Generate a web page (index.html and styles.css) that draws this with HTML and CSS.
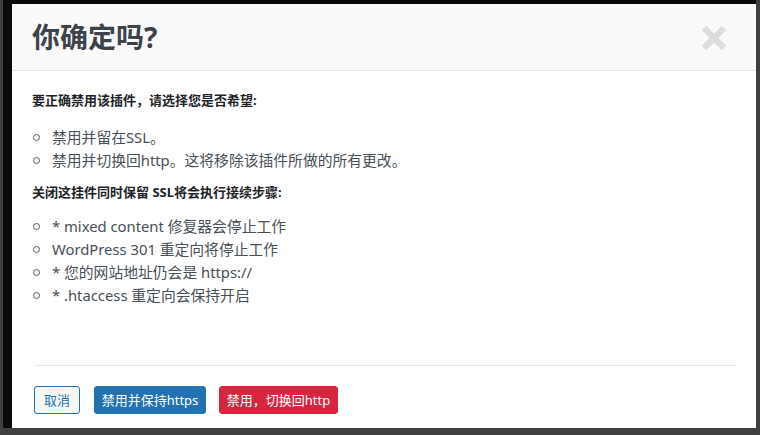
FILE: index.html
```html
<!DOCTYPE html>
<html lang="zh">
<head>
<meta charset="utf-8">
<link rel="stylesheet" href="styles.css">
</head>
<body>
<div class="frame">
  <div class="modal">
    <div class="modal-header">
      <h1 class="title">你确定吗?</h1>
      <span class="close" aria-label="close">
        <svg width="28" height="28" viewBox="0 0 28 28"><path d="M4 4 L24 24 M24 4 L4 24" stroke="#dcdcdc" stroke-width="6.5" stroke-linecap="butt"/></svg>
      </span>
    </div>
    <div class="modal-body">
      <p class="lead lead-first">要正确禁用该插件，请选择您是否希望:</p>
      <ul class="list list-first">
        <li>禁用并留在SSL。</li>
        <li>禁用并切换回http。这将移除该插件所做的所有更改。</li>
      </ul>
      <p class="lead">关闭这挂件同时保留 SSL将会执行接续步骤:</p>
      <ul class="list list-second">
        <li>* mixed content 修复器会停止工作</li>
        <li>WordPress 301 重定向将停止工作</li>
        <li>* 您的网站地址仍会是 https://</li>
        <li>* .htaccess 重定向会保持开启</li>
      </ul>
    </div>
    <div class="modal-footer">
      <button class="btn btn-cancel">取消</button>
      <button class="btn btn-primary">禁用并保持https</button>
      <button class="btn btn-danger">禁用，切换回http</button>
    </div>
  </div>
</div>
</body>
</html>
```
FILE: styles.css
```css
html, body {
  margin: 0;
  padding: 0;
}
body {
  background: #404040;
  width: 760px;
  height: 435px;
  overflow: hidden;
  font-family: "Noto Sans", "Noto Sans CJK SC", sans-serif;
}
.frame {
  margin-left: 3px;
  width: 753px;
  height: 428px;
  box-sizing: border-box;
  padding: 4px 0 0 9px;
  background: #0a0a0a;
}
.modal {
  width: 744px;
  height: 424px;
  background: #ffffff;
  display: flex;
  flex-direction: column;
}
.modal-header {
  height: 67px;
  box-sizing: border-box;
  background: #fafafa;
  border-bottom: 1px solid #e5e5e5;
  display: flex;
  align-items: center;
  justify-content: space-between;
  padding: 0 28px 0 20px;
}
.title {
  margin: 0;
  font-size: 28px;
  font-weight: 700;
  color: #3c434a;
  line-height: 1;
}
.close {
  display: flex;
  margin-top: 2px;
}
.modal-body {
  padding: 0 20px;
  color: #3c434a;
}
.lead {
  margin: 0;
  font-size: 13px;
  font-weight: 700;
  line-height: 20px;
  color: #1d2327;
}
.lead-first {
  margin-top: 19px;
}
.list {
  list-style: none;
  margin: 16px 0 10px 0;
  padding: 0;
}
.list-second {
  margin-top: 13px;
}
.list li {
  display: flex;
  align-items: center;
  font-size: 14.8px;
  line-height: 23px;
  color: #474f57;
}
.list li::before {
  content: "";
  width: 5px;
  height: 5px;
  border: 1px solid #50575e;
  border-radius: 50%;
  margin: 0 12px 0 1px;
  flex: none;
}
.modal-footer {
  margin: auto 20px 0 22px;
  border-top: 1px solid #e5e5e5;
  padding: 20px 0 14px;
  display: flex;
  gap: 14px;
}
.btn {
  height: 28px;
  box-sizing: border-box;
  border-radius: 3px;
  font-family: "Noto Sans", "Noto Sans CJK SC", sans-serif;
  font-size: 13px;
  padding: 0 10px;
  border: 1px solid transparent;
  line-height: 26px;
  cursor: pointer;
}
.btn-cancel {
  background: #f6f7f7;
  border-color: #2271b1;
  color: #2271b1;
  width: 46px;
  padding: 0;
}
.btn-primary {
  background: #2271b1;
  border-color: #2271b1;
  color: #ffffff;
  width: 112px;
  padding: 0;
}
.btn-danger {
  background: #d9243f;
  border-color: #d9243f;
  color: #ffffff;
  width: 119px;
  padding: 0;
  margin-left: -1px;
}
```
